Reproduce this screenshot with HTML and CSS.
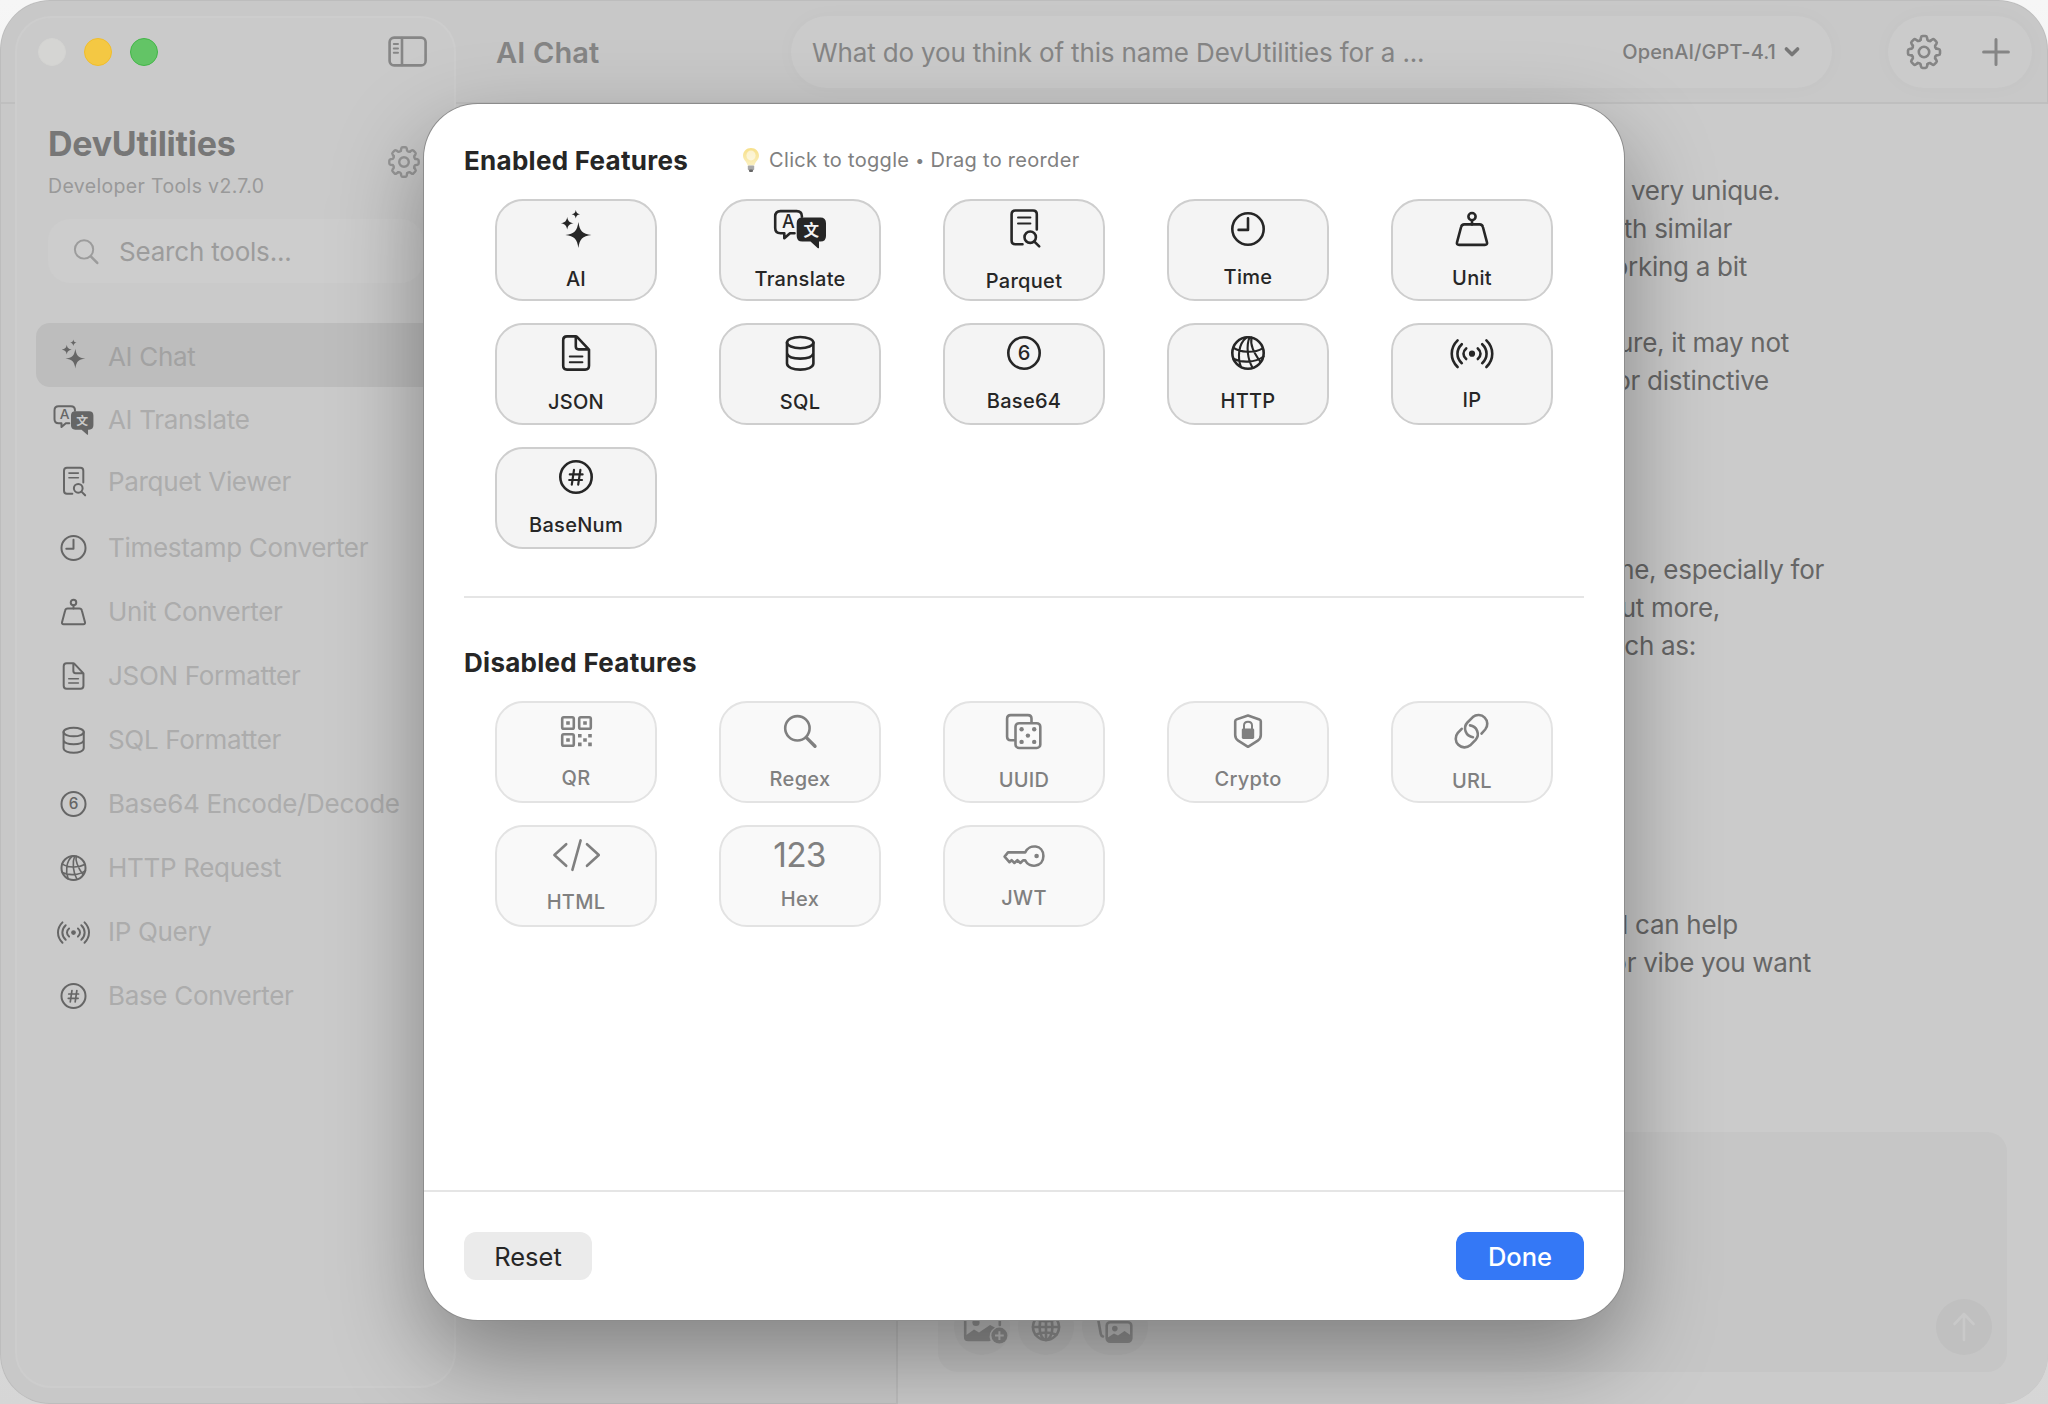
FILE: index.html
```html
<!DOCTYPE html>
<html lang="en">
<head>
<meta charset="utf-8">
<title>DevUtilities</title>
<link rel="stylesheet" href="styles.css">
</head>
<body>
<svg class="defs" width="0" height="0" aria-hidden="true">
  <defs>
    <linearGradient id="glass" x1="0" y1="0" x2="0" y2="1">
      <stop offset="0" stop-color="#f7e08a"/><stop offset="1" stop-color="#fbf0c0"/>
    </linearGradient>
    <g id="i-ai" class="solid">
      <path d="M34.4 15C35.7 24 38.4 26.7 47.4 28C38.4 29.3 35.7 32 34.4 41C33.1 32 30.4 29.3 21.4 28C30.4 26.7 33.1 24 34.4 15Z"/>
      <path d="M23.2 10C23.9 14.1 25.3 15.5 29.6 16.3C25.3 17.1 23.9 18.5 23.2 22.6C22.5 18.5 21.1 17.1 16.8 16.3C21.1 15.5 22.5 14.1 23.2 10Z"/>
      <path d="M31.8 3C32.3 5.7 33.2 6.7 36 7.2C33.2 7.7 32.3 8.7 31.8 11.4C31.3 8.7 30.4 7.7 27.6 7.2C30.4 6.7 31.3 5.7 31.8 3Z"/>
    </g>
    <g id="i-translate">
      <path class="line" d="M26.5 26.2H22L16.3 31.2V26.2H12.5Q7.2 26.2 7.2 21V9.3Q7.2 4.1 12.5 4.1H28.6Q33.9 4.1 33.9 9.3V9.8"/>
      <path class="solid" d="M34.3 10.6H52.4Q58 10.6 58 16.2V29Q58 34.6 52.4 34.6H51V41Q50.5 41.6 49.6 41L42.5 34.6H34.3Q28.7 34.6 28.7 29V16.2Q28.7 10.6 34.3 10.6Z"/>
      <text class="mark mark-a" x="20.4" y="21.2">A</text>
      <text class="mark mark-cjk" x="43.3" y="28.6">文</text>
    </g>
    <g id="i-parquet" class="line">
      <path d="M30.5 37.3H23.4Q19.6 37.3 19.6 33.5V7.3Q19.6 3.5 23.4 3.5H41Q44.8 3.5 44.8 7.3V22.5"/>
      <path d="M26 10.4H38.4M26 16.4H38.4" class="thin"/>
      <circle cx="38.2" cy="30.2" r="5.7"/><path d="M42.4 34.6L47.2 39.4"/>
    </g>
    <g id="i-time" class="line"><circle cx="32" cy="22" r="15.7"/><path d="M32 11.2V22.9H22.6"/></g>
    <g id="i-unit" class="line">
      <circle cx="32" cy="9.6" r="3.6"/><path d="M32 13.2V17.4"/>
      <path d="M24.3 17.4H39.7Q42.3 17.4 42.9 20L47 35.3Q47.6 37.9 44.9 37.9H19.1Q16.4 37.9 17 35.3L21.1 20Q21.7 17.4 24.3 17.4Z"/>
    </g>
    <g id="i-json" class="line">
      <path d="M31.8 5.4H23Q19.2 5.4 19.2 9.2V34.8Q19.2 38.6 23 38.6H41.2Q45 38.6 45 34.8V18.6L33 5.8Q32.6 5.4 31.8 5.4ZV15.6Q31.8 18.4 34.6 18.4H44.6"/>
      <path class="thin" d="M25.8 25.6H38.4M25.8 31.2H38.4"/>
    </g>
    <g id="i-sql" class="line">
      <ellipse cx="32.2" cy="11.6" rx="13.2" ry="5.6"/>
      <path d="M19 11.6V32.6C19 40.6 45.4 40.6 45.4 32.6V11.6M19 22.4C21 29.4 43.4 29.4 45.4 22.4"/>
    </g>
    <g id="i-base64"><circle class="line" cx="32" cy="22" r="15.7"/><text class="mark" x="32" y="29">6</text></g>
    <g id="i-http" class="line">
      <circle cx="32" cy="22" r="15.7"/>
      <g class="mesh"><path d="M17.2 16.6C24 21.5 38 22.5 46.6 17.4M17.4 27.8C25 31.8 39 32 47.6 25.5M30.6 6.4C22 13 21.5 27 25 36.2M33.5 6.4C30 15 31.5 28 36.5 36.6M35.5 6.6C34 14 37.5 21 44.5 31"/></g>
    </g>
    <g id="i-ip" class="line">
      <circle class="solid" cx="32" cy="22.7" r="3.1" stroke="none"/>
      <path d="M17.6 9.4C9.8 17 9.8 28.4 17.6 36M46.4 9.4C54.2 17 54.2 28.4 46.4 36M21.8 13.2C16 18.6 16 26.8 21.8 32.2M42.2 13.2C48 18.6 48 26.8 42.2 32.2M26.2 17.4C22.6 20.4 22.6 25 26.2 28M37.8 17.4C41.4 20.4 41.4 25 37.8 28"/>
    </g>
    <g id="i-num"><circle class="line" cx="32" cy="22" r="15.7"/><g class="line" stroke-linecap="round"><path class="hash" d="M30 14.8L27.8 29.6M36.4 14.8L34.2 29.6M25.8 19.4H38.6M25.2 25H38"/></g></g>
    <g id="i-qr">
      <g class="line"><rect x="18.2" y="8.2" width="11.6" height="11.6" rx="1.6"/><rect x="35.2" y="8.2" width="11.6" height="11.6" rx="1.6"/><rect x="18.2" y="25.2" width="11.6" height="11.6" rx="1.6"/></g>
      <path class="solid" d="M22.2 12.2h3.6v3.6h-3.6zM39.2 12.2h3.6v3.6h-3.6zM22.2 29.2h3.6v3.6h-3.6zM34 25h3.6v3.6H34zM44.2 25h3.6v3.6h-3.6zM39.2 29.2h3.6v3.6h-3.6zM34 33.6h3.6v3.6H34zM44.2 33.6h3.6v3.6h-3.6z"/>
    </g>
    <g id="i-search" class="line"><circle cx="29.4" cy="19.3" r="12.2"/><path class="heavy" d="M38.4 28.6L47 37.3"/></g>
    <g id="i-uuid">
      <path class="line" d="M22 31.2H18.6Q15.1 31.2 15.1 27.7V9.6Q15.1 6.1 18.6 6.1H36Q39.5 6.1 39.5 9.6V13"/>
      <rect class="line" x="23.5" y="14.2" width="24.8" height="24.8" rx="3.6"/>
      <g class="solid"><circle cx="29.6" cy="20.3" r="2.2"/><circle cx="42.2" cy="20.3" r="2.2"/><circle cx="35.9" cy="26.6" r="2.2"/><circle cx="29.6" cy="32.9" r="2.2"/><circle cx="42.2" cy="32.9" r="2.2"/></g>
    </g>
    <g id="i-crypto">
      <path class="line" d="M32 6.6L43.4 10.4Q44.8 10.9 44.8 12.2V26Q44.8 29.6 41.8 31.6L32 37.8L22.2 31.6Q19.2 29.6 19.2 26V12.2Q19.2 10.9 20.6 10.4Z"/>
      <rect class="solid" x="25.8" y="19.4" width="12.4" height="10.6" rx="1.4"/>
      <path class="line thin" d="M28 20V16.6C28 11.6 36 11.6 36 16.6V20"/>
    </g>
    <g id="i-url" class="line"><path d="M41.5 24.6L45.2 20.5A8.8 8.8 0 0 0 32.8 8.1L27.4 13.5A8.8 8.8 0 0 0 33 28.2M21.7 19.8L17.8 23.9A8.8 8.8 0 0 0 30.2 36.3L35.6 30.9A8.8 8.8 0 0 0 30 16.4"/></g>
    <g id="i-html" class="line"><path d="M22.2 11.2L10.4 22L22.2 32.8M43 11.2L54.8 22L43 32.8M36.6 7.4L28.4 36.8"/></g>
    <g id="i-key">
      <path class="line" d="M33.2 19.4C37 10.6 51.4 11.4 51.4 23C51.4 34.6 37 35.4 33.2 27.4H31L28.4 30L25.4 27.2L22.4 30L19.6 27.2L17.4 29.2L12.6 23.6L16 19.4Z"/>
      <circle class="solid" cx="44.6" cy="23" r="2.3"/>
    </g>
    <path id="tooth" d="M12.3 -3.4L14.6 -3Q16 -2.7 16 -1.4V1.4Q16 2.7 14.6 3L12.3 3.4Q10.7 4.44 11.1 6.3"/>
    <g id="gear">
      <use href="#tooth"/><use href="#tooth" transform="rotate(45)"/><use href="#tooth" transform="rotate(90)"/><use href="#tooth" transform="rotate(135)"/><use href="#tooth" transform="rotate(180)"/><use href="#tooth" transform="rotate(225)"/><use href="#tooth" transform="rotate(270)"/><use href="#tooth" transform="rotate(315)"/>
      <circle r="5.2"/>
    </g>
  </defs>
</svg>

<div class="window">
  <aside class="sidebar">
    <div class="titlebar">
      <span class="light close"></span><span class="light minimize"></span><span class="light zoom"></span>
      <svg class="toggle line" width="40" height="32" viewBox="0 0 40 32"><rect x="1.6" y="1.6" width="36" height="27.8" rx="4.5"/><path d="M14 2V29"/><path class="thin" d="M5.8 8H10M5.8 12.4H10M5.8 16.8H10"/></svg>
    </div>
    <header class="brand">
      <div><h1>DevUtilities</h1><p>Developer Tools v2.7.0</p></div>
      <svg class="brand-gear line" width="34" height="34" viewBox="-18.5 -18.5 37 37"><use href="#gear"/></svg>
    </header>
    <div class="search">
      <svg width="48" height="33" viewBox="0 0 64 44"><use href="#i-search"/></svg>
      <span>Search tools...</span>
    </div>
    <nav class="tools">
      <a class="tool selected"><svg viewBox="0 0 64 44"><use href="#i-ai"/></svg><span>AI Chat</span></a>
      <a class="tool short"><svg viewBox="0 0 64 44"><use href="#i-translate"/></svg><span>AI Translate</span></a>
      <a class="tool short"><svg viewBox="0 0 64 44"><use href="#i-parquet"/></svg><span>Parquet Viewer</span></a>
      <a class="tool spaced"><svg viewBox="0 0 64 44"><use href="#i-time"/></svg><span>Timestamp Converter</span></a>
      <a class="tool"><svg viewBox="0 0 64 44"><use href="#i-unit"/></svg><span>Unit Converter</span></a>
      <a class="tool"><svg viewBox="0 0 64 44"><use href="#i-json"/></svg><span>JSON Formatter</span></a>
      <a class="tool"><svg viewBox="0 0 64 44"><use href="#i-sql"/></svg><span>SQL Formatter</span></a>
      <a class="tool"><svg viewBox="0 0 64 44"><use href="#i-base64"/></svg><span>Base64 Encode/Decode</span></a>
      <a class="tool"><svg viewBox="0 0 64 44"><use href="#i-http"/></svg><span>HTTP Request</span></a>
      <a class="tool"><svg viewBox="0 0 64 44"><use href="#i-ip"/></svg><span>IP Query</span></a>
      <a class="tool"><svg viewBox="0 0 64 44"><use href="#i-num"/></svg><span>Base Converter</span></a>
    </nav>
  </aside>

  <main class="main">
    <div class="toolbar">
      <h2>AI Chat</h2>
      <div class="pill topic">
        <span class="topic-name">What do you think of this name DevUtilities for a ...</span>
        <span class="model">OpenAI/GPT-4.1</span>
        <svg class="chevron" width="16" height="12" viewBox="0 0 16 12"><path d="M2.4 3L8 8.6L13.6 3"/></svg>
      </div>
      <div class="pill actions">
        <svg class="line" width="38" height="38" viewBox="-19 -19 38 38"><use href="#gear"/></svg>
        <svg class="line plus" width="30" height="30" viewBox="0 0 30 30"><path d="M15 2.6V27.4M2.6 15H27.4"/></svg>
      </div>
    </div>
    <div class="content">
      <div class="threads"></div>
      <section class="chat">
        <div class="messages">
          <p class="end-a">not very unique.</p>
          <p class="end-b">with similar</p>
          <p class="end-c">working a bit</p>
          <p>&nbsp;</p>
          <p class="end-d">nature, it may not</p>
          <p class="end-e">or distinctive</p>
          <p class="end-f gap-m">name, especially for</p>
          <p class="end-g">out more,</p>
          <p class="end-h">such as:</p>
          <p class="end-i gap-l">I can help</p>
          <p class="end-j">or vibe you want</p>
        </div>
        <div class="composer">
          <span class="chip"><svg width="56" height="56" viewBox="0 0 56 56"><path class="line" d="M35 41H14Q11.200 41 11.200 38V18Q11.200 15 14 15H43Q45.800 15 45.800 18V26"/><path class="solid" d="M11 37L20 30.500L25 33.500L36 26L41 28.500A10.400 10.400 0 0 0 36.500 42H14Q11 42 11 39Z"/><circle class="solid" cx="22" cy="23.500" r="3.600"/><circle class="solid" cx="45.400" cy="36.600" r="8"/><path class="cutline" d="M45.400 32.200V41M41 36.600H49.800"/></svg></span>
          <span class="chip"><svg class="line" width="34" height="34" viewBox="0 0 34 34"><circle cx="17" cy="17" r="13"/><ellipse cx="17" cy="17" rx="6.4" ry="13"/><path d="M17 4V30M4 17H30M6.600 9.4Q17 13.500 27.400 9.4M6.600 24.6Q17 20.500 27.400 24.6"/></svg></span>
          <span class="chip wide"><svg width="66" height="56" viewBox="0 0 66 56"><path class="line" d="M21 37.500Q19.200 37 18.800 35L15.200 15Q15 12 18 12H38Q41 12 42 14"/><rect class="line" x="24.700" y="23.200" width="24.600" height="19.600" rx="3.500"/><path class="solid" d="M25 39L32 34.500L36 36.500L42.500 32L49 36.500V43H25Z"/><circle class="solid" cx="32.800" cy="29.600" r="2.800"/></svg></span>
          <span class="send"><svg width="24" height="30" viewBox="0 0 24 30"><path d="M12 2V28M2.5 12L12 2L21.5 12"/></svg></span>
        </div>
      </section>
    </div>
  </main>
</div>

<div class="sheet" role="dialog">
  <div class="sheet-body">
    <div class="heading">
      <h3>Enabled Features</h3>
      <p class="hint"><svg width="18" height="26" viewBox="0 0 18 26"><path d="M9 1C4.400 1 1 4.500 1 8.800C1 13.200 5 14.600 5.600 18.600H12.400C13 14.600 17 13.200 17 8.800C17 4.500 13.600 1 9 1Z" fill="url(#glass)"/><ellipse cx="9" cy="8.500" rx="4.600" ry="5" fill="#fff" opacity=".55"/><rect x="5.800" y="18.600" width="6.400" height="4.600" rx="1" fill="#a9a9a9"/><rect x="7" y="22.600" width="4" height="2.400" rx="1" fill="#666"/></svg>Click to toggle <span class="dot">•</span> Drag to reorder</p>
    </div>
    <div class="grid">
      <button class="card"><svg width="64" height="60"><use href="#i-ai"/></svg>AI</button>
      <button class="card"><svg width="64" height="60"><use href="#i-translate"/></svg>Translate</button>
      <button class="card"><svg width="64" height="62"><use href="#i-parquet"/></svg>Parquet</button>
      <button class="card"><svg width="64" height="58"><use href="#i-time"/></svg>Time</button>
      <button class="card"><svg width="64" height="59"><use href="#i-unit"/></svg>Unit</button>
      <button class="card"><svg width="64" height="59"><use href="#i-json"/></svg>JSON</button>
      <button class="card"><svg width="64" height="59"><use href="#i-sql"/></svg>SQL</button>
      <button class="card"><svg width="64" height="58"><use href="#i-base64"/></svg>Base64</button>
      <button class="card"><svg width="64" height="58"><use href="#i-http"/></svg>HTTP</button>
      <button class="card"><svg width="64" height="57"><use href="#i-ip"/></svg>IP</button>
      <button class="card"><svg width="64" height="58"><use href="#i-num"/></svg>BaseNum</button>
    </div>
    <hr>
    <div class="heading"><h3>Disabled Features</h3></div>
    <div class="grid off">
      <button class="card"><svg width="64" height="57"><use href="#i-qr"/></svg>QR</button>
      <button class="card"><svg width="64" height="58"><use href="#i-search"/></svg>Regex</button>
      <button class="card"><svg width="64" height="59"><use href="#i-uuid"/></svg>UUID</button>
      <button class="card"><svg width="64" height="58"><use href="#i-crypto"/></svg>Crypto</button>
      <button class="card"><svg width="64" height="60"><use href="#i-url"/></svg>URL</button>
      <button class="card"><svg width="64" height="57"><use href="#i-html"/></svg>HTML</button>
      <button class="card"><svg width="64" height="54"><text class="digits" x="31.500" y="34.300">123</text></svg>Hex</button>
      <button class="card"><svg width="64" height="53"><use href="#i-key"/></svg>JWT</button>
    </div>
  </div>
  <footer class="sheet-footer">
    <button class="btn">Reset</button>
    <button class="btn primary">Done</button>
  </footer>
</div>
</body>
</html>
```
FILE: styles.css
```css
* { box-sizing: border-box; }

body {
  margin: 0;
  width: 2048px;
  height: 1404px;
  overflow: hidden;
  position: relative;
  background: linear-gradient(#f6f6f6, #d6d6d6);
  font-family: Inter, "Noto Sans CJK SC", sans-serif;
  color: #262626;
}

h1, h2, h3, p { margin: 0; }
button { font-family: inherit; margin: 0; }
svg { display: block; overflow: visible; }
.defs { position: absolute; }

.line { fill: none; stroke: currentColor; stroke-width: 2.6; stroke-linecap: round; stroke-linejoin: round; }
.thin { stroke-width: 2; }
.mesh { stroke-width: 2.1; }
.hash { stroke-width: 2.2; }
.heavy { stroke-width: 3.4; }
.solid { fill: currentColor; }
.mark { fill: currentColor; font-size: 20px; font-weight: 500; text-anchor: middle; letter-spacing: 0; }
.mark-a { font-size: 18px; font-weight: 500; }
.mark-cjk { fill: var(--ground, #f4f4f4); font-family: "Noto Sans CJK SC", sans-serif; font-size: 15.5px; font-weight: 700; }
.digits { fill: currentColor; font-size: 33.5px; font-weight: 400; text-anchor: middle; letter-spacing: -0.8px; }

/* Window */
.window {
  display: flex;
  width: 2048px;
  height: 1404px;
  border-radius: 50px;
  overflow: hidden;
  box-shadow: inset 0 0 0 1px #bdbdbd;
  background: linear-gradient(transparent 102px, #bfbfbf 102px, #bfbfbf 104px, transparent 104px), #c8c8c8;
}

/* Sidebar */
.sidebar {
  --ground: #cacaca;
  flex: none;
  width: 441px;
  margin: 16px 0 16px 15px;
  border: 2px solid #cdcdcd;
  border-radius: 36px;
  background: #cacaca;
}
.titlebar { display: flex; align-items: center; height: 68px; padding: 0 26px 0 21px; gap: 18px; }
.light { width: 28px; height: 28px; border-radius: 50%; border: 1px solid #d3d3d1; background: #d5d5d3; }
.minimize { background: #f4c843; border-color: #f0bd2c; }
.zoom { background: #63c466; border-color: #43b648; }
.toggle { margin-left: auto; color: #868686; }
.brand { display: flex; justify-content: space-between; align-items: flex-start; margin: 32px 33px 0 31px; height: 101px; }
.brand h1 { font-size: 34px; line-height: 40px; font-weight: 700; letter-spacing: -0.25px; color: #777; margin-top: 6px; }
.brand p { font-size: 19.5px; line-height: 24px; color: #999; margin-top: 10px; letter-spacing: .35px; }
.brand-gear { color: #979797; margin-top: 27px; }
.search {
  display: flex; align-items: center; gap: 9px;
  margin: 0 31px; height: 64px; padding-left: 14px;
  border-radius: 22px; background: #cdcdcd;
  font-size: 26px; letter-spacing: -.2px; color: #9c9c9c;
}
.tools { margin: 40px 12px 0 19px; }
.tool { display: flex; align-items: center; height: 64px; padding-left: 13px; gap: 10px; font-size: 26px; letter-spacing: -.32px; color: #acacac; }
.tool svg { width: 49px; height: 38px; padding-top: 4px; color: #666; }
.tool span { padding-top: 2px; }
.tool.short { height: 62px; }
.tool.spaced { margin-top: 3px; }
.tool.selected { background: #bdbdbd; border-radius: 14px; color: #a2a2a2; }
.tool.selected svg { padding-top: 0; padding-bottom: 2px; }

/* Main column */
.main { flex: 1; display: flex; flex-direction: column; min-width: 0; }
.toolbar { display: flex; align-items: center; height: 104px; padding: 0 16px 0 40px; color: #858585; }
.toolbar h2 { width: 295px; font-size: 29px; font-weight: 600; letter-spacing: .15px; }
.pill { display: flex; align-items: center; height: 72px; border-radius: 36px; background: #cbcbcb; box-shadow: 0 0 22px rgba(0, 0, 0, .025); }
.topic { width: 1041px; padding: 0 32px 0 21px; }
.topic-name { flex: 1; font-size: 26px; letter-spacing: -.15px; padding-top: 1px; }
.model { font-size: 20px; font-weight: 500; letter-spacing: .1px; color: #7c7c7c; }
.chevron { margin-left: 8px; fill: none; stroke: #777; stroke-width: 3.6; stroke-linecap: round; stroke-linejoin: round; }
.actions { width: 144px; margin-left: 56px; padding: 0 21px 0 17px; justify-content: space-between; }
.plus { stroke-width: 3; }
.content { flex: 1; display: flex; }
.threads { width: 442px; border-right: 2px solid #bebebe; }
.chat { flex: 1; display: flex; flex-direction: column; background: #cbcbcb; padding: 68px 41px 32px 40px; }
.messages { flex: 1; font-size: 26px; line-height: 38px; letter-spacing: -.28px; color: #666; text-align: right; }
.end-a { padding-right: 227px; }
.end-b { padding-right: 275px; }
.end-c { padding-right: 260px; }
.end-d { padding-right: 218px; }
.end-e { padding-right: 238px; }
.end-f { padding-right: 183px; }
.end-g { padding-right: 287px; }
.end-h { padding-right: 311px; }
.end-i { padding-right: 269px; }
.end-j { padding-right: 196px; }
.messages .gap-m { margin-top: 151px; }
.messages .gap-l { margin-top: 241px; }
.composer { display: flex; align-items: flex-end; gap: 8px; height: 240px; padding: 0 15px 17px 16px; border-radius: 20px; background: #c6c6c6; color: #929292; }
.chip { display: flex; align-items: center; justify-content: center; width: 56px; height: 56px; border-radius: 28px; background: #c1c1c1; }
.chip.wide { width: 66px; }
.cutline { stroke: #c1c1c1; stroke-width: 2; }
.send { display: flex; align-items: center; justify-content: center; width: 56px; height: 56px; margin-left: auto; border-radius: 50%; background: #c0c0c0; }
.send path { fill: none; stroke: #c9c9c9; stroke-width: 2.6; stroke-linecap: round; stroke-linejoin: round; }

/* Sheet over the window */
.sheet {
  position: absolute;
  left: 424px;
  top: 104px;
  width: 1200px;
  height: 1216px;
  display: flex;
  flex-direction: column;
  border-radius: 54px;
  background: #fff;
  box-shadow: 0 0 0 1px #8c8c8c, 0 36px 90px rgba(0, 0, 0, .36);
}
.sheet-body { flex: 1; padding: 39px 40px 0; }
.heading { display: flex; align-items: center; height: 34px; gap: 54px; }
.heading h3 { font-size: 26px; line-height: 34px; font-weight: 700; letter-spacing: .28px; padding-top: 2px; }
.hint { display: flex; align-items: center; font-size: 20px; letter-spacing: .3px; white-space: pre; color: #808080; }
.hint svg { margin-right: 9px; }
.dot { font-size: 16px; }
.grid { display: grid; grid-template-columns: repeat(5, 224px); justify-items: center; row-gap: 22px; margin-top: 22px; }
.card {
  display: flex; flex-direction: column; align-items: center;
  width: 162px; height: 102px; padding: 6px 0 0;
  border: 2px solid #cecece; border-radius: 28px;
  background: #f4f4f4; color: #262626;
  font-size: 20px; line-height: 24px; font-weight: 500; letter-spacing: .3px;
}
.off .card { background: #f9f9f9; border-color: #e3e3e3; color: #808080; }
.sheet hr { height: 2px; margin: 47px 0; border: 0; background: #e5e5e5; }
.sheet-footer { display: flex; justify-content: space-between; align-items: center; height: 130px; border-top: 2px solid #e5e5e5; padding: 0 40px; }
.btn { width: 128px; height: 48px; padding: 0; border: 0; border-radius: 12px; background: #ebebeb; color: #262626; font-size: 25.5px; }
.btn.primary { background: #3478f6; color: #fff; font-weight: 500; }
```
